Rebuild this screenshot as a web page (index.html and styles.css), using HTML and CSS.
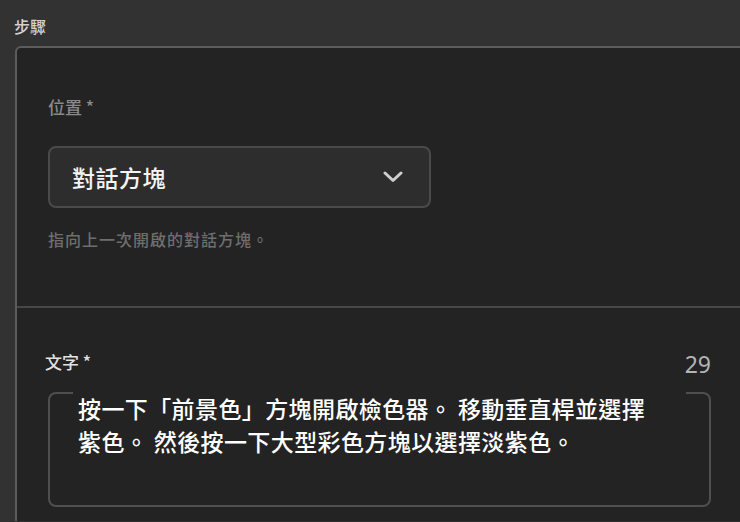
FILE: index.html
```html
<!DOCTYPE html>
<html>
<head>
  <title>步驟</title>
  <link rel="stylesheet" href="styles.css">
</head>
<body>
  <div class="step-label">步驟</div>
  <div class="panel">
    <!-- 位置 -->
    <div class="section section-place">
      <div class="field-label">位置 *</div>
      <div class="select">
        <span class="select-value">對話方塊</span>
        <svg class="chevron" width="20" height="12" viewBox="0 0 20 12">
          <path d="M2 2 L10 9.5 L18 2" fill="none" stroke="#cfcfcf" stroke-width="3" stroke-linecap="round" stroke-linejoin="round"/>
        </svg>
      </div>
      <div class="helper">指向上一次開啟的對話方塊。</div>
    </div>
    <!-- 文字 -->
    <div class="section section-text">
      <div class="text-head">
        <span class="text-label">文字 *</span>
        <span class="count">29</span>
      </div>
      <div class="textbox">
        <div class="textbox-content">按一下「前景色」方塊開啟檢色器。 移動垂直桿並選擇<br>紫色。 然後按一下大型彩色方塊以選擇淡紫色。</div>
      </div>
    </div>
  </div>
</body>
</html>
```

FILE: styles.css
```css
html, body {
  margin: 0;
  padding: 0;
}

body {
  width: 740px;
  height: 522px;
  overflow: hidden;
  background: #323232;
  font-family: "Noto Sans CJK TC", "Noto Sans", sans-serif;
}

.step-label {
  padding: 15px 0 0 14px;
  font-size: 16px;
  font-weight: 500;
  line-height: 22px;
  color: #d2d2d2;
}

.panel {
  margin: 9px 0 0 15px;
  height: 475px;
  box-sizing: border-box;
  overflow: hidden;
  background: #232323;
  border-top: 2px solid #5c5c5c;
  border-left: 2px solid #5c5c5c;
  border-top-left-radius: 6px;
}

.section-place {
  padding: 47px 0 57px 31px;
}

.field-label {
  font-size: 17px;
  font-weight: 500;
  line-height: 24px;
  color: #8a8a8a;
}

.select {
  margin-top: 27px;
  height: 58px;
  width: 331px;
  display: flex;
  align-items: center;
  justify-content: space-between;
  padding: 0 26px 0 22px;
  background: #2d2d2d;
  border: 2px solid #4a4a4a;
  border-radius: 8px;
}

.select-value {
  font-size: 23px;
  font-weight: 500;
  letter-spacing: 0.5px;
  color: #f4f4f4;
}

.chevron {
  display: block;
}

.helper {
  margin-top: 21px;
  font-size: 16px;
  font-weight: 500;
  line-height: 20px;
  letter-spacing: 1px;
  color: #6e6e6e;
}

.section-text {
  border-top: 2px solid #474747;
  padding: 41px 29px 0 31px;
}

.text-head {
  display: flex;
  justify-content: space-between;
  align-items: center;
  height: 24px;
}

.text-label {
  margin-left: -3px;
  font-size: 17px;
  font-weight: 500;
  color: #e2e2e2;
}

.count {
  font-family: "Noto Sans", sans-serif;
  font-size: 23px;
  color: #b4b4b4;
  margin-top: 6px;
}

.textbox {
  margin-top: 19px;
  height: 111px;
  border: 2px solid #4f4f4f;
  border-radius: 8px;
  padding: 0 23px;
}

.textbox-content {
  margin-top: -2px;
  padding-left: 5px;
  background: #232323;
  font-size: 23px;
  font-weight: 500;
  line-height: 33px;
  letter-spacing: 0.4px;
  color: #ffffff;
}
```
